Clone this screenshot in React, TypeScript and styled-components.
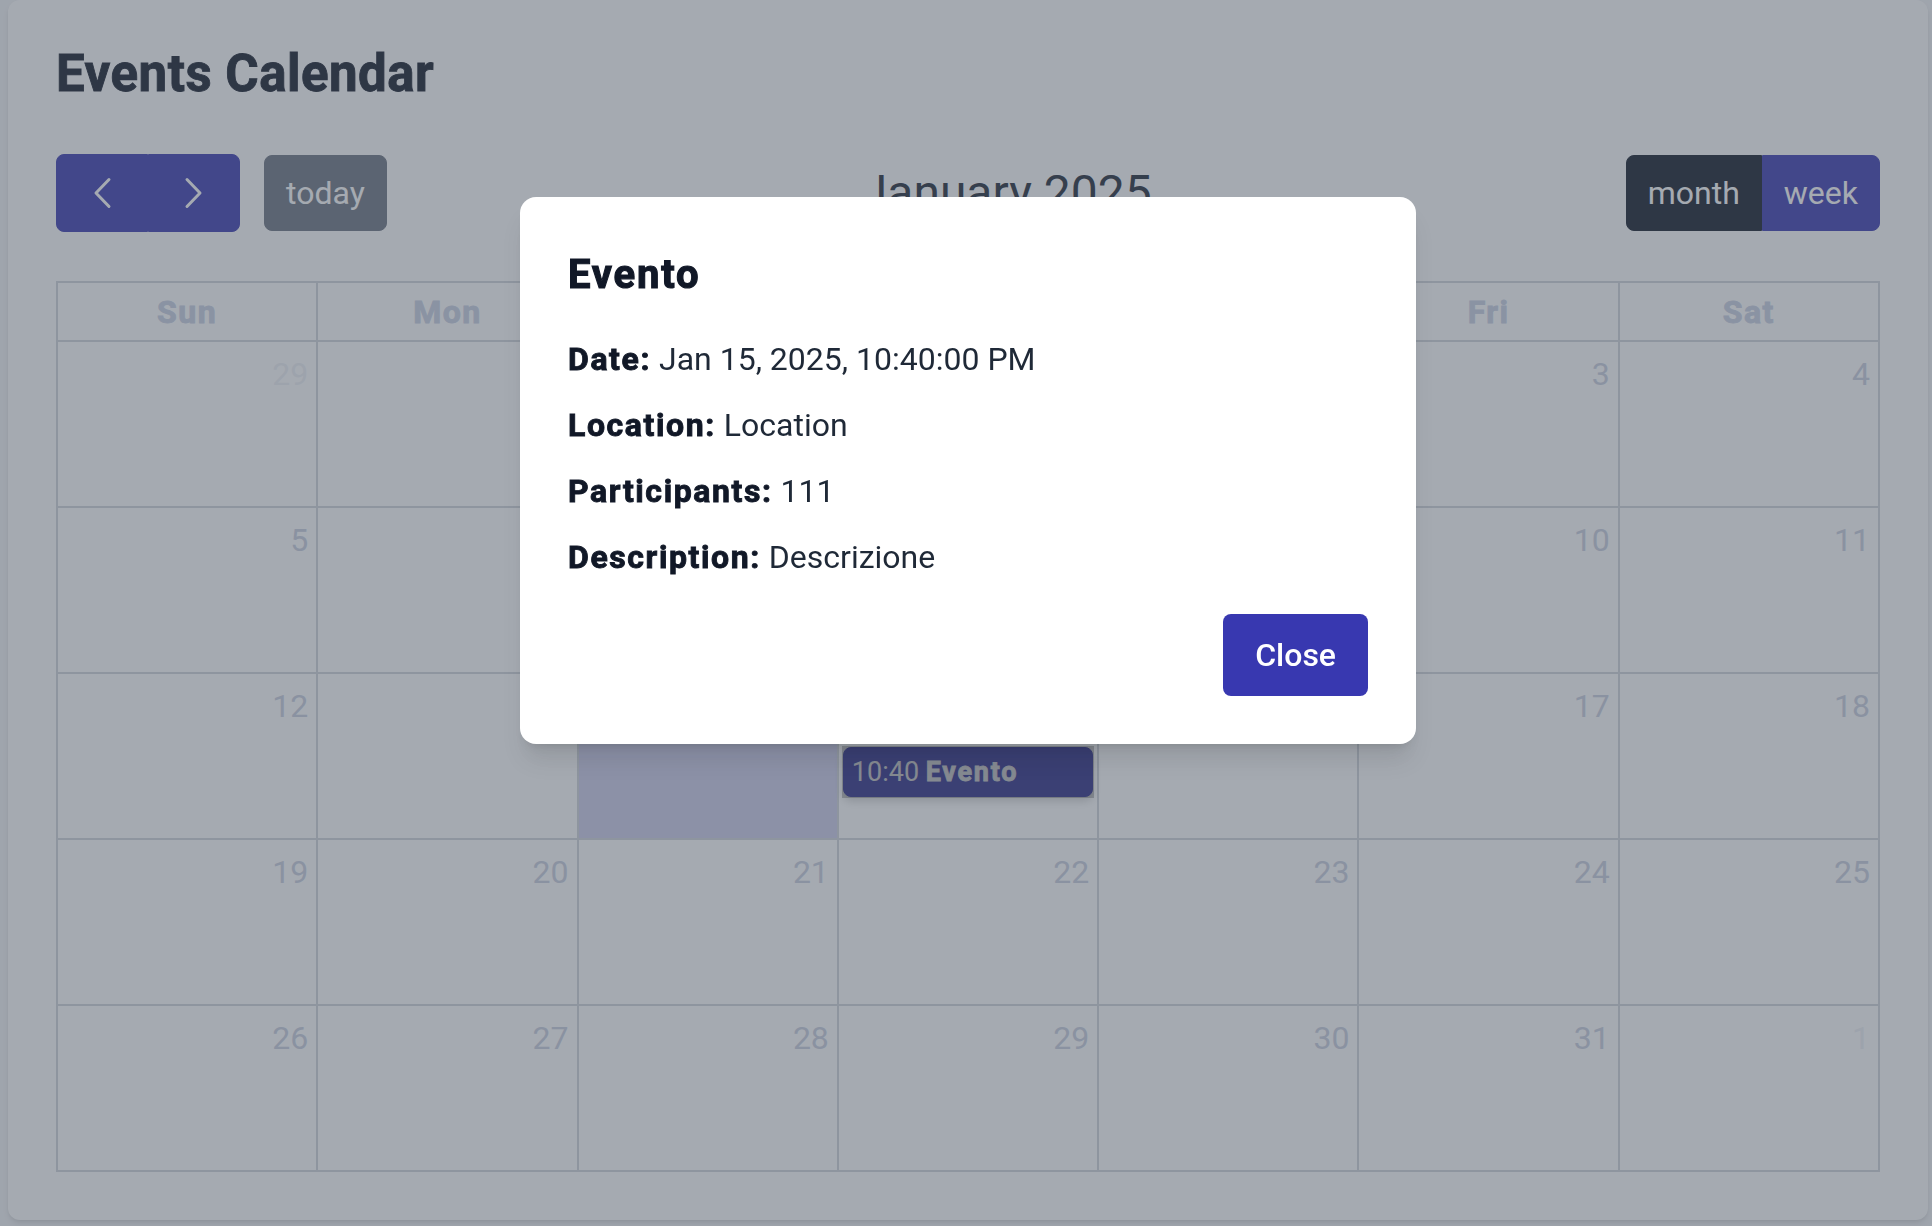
import React from "react";
import styled, { createGlobalStyle, css } from "styled-components";

const GlobalStyle = createGlobalStyle`
  html, body {
    margin: 0;
    padding: 0;
  }
  body {
    background: #f3f4f6;
    font-family: Roboto, "Liberation Sans", Arial, sans-serif;
    color: #111827;
  }
  *, *::before, *::after {
    box-sizing: border-box;
  }
`;

const INDIGO = "#3838b0";
const LINE = "#d1d5db";

/* Heavy (black-like) weight: bold face thickened and slightly widened */
const heavy = (stroke: number, spacing: number) => css`
  font-weight: 700;
  -webkit-text-stroke: ${stroke}px currentColor;
  letter-spacing: ${spacing}px;
`;

const Page = styled.div`
  padding: 0 4px 6px 8px;
`;

const Card = styled.main`
  width: 1920px;
  background: #ffffff;
  border-radius: 12px;
  box-shadow: 0 4px 6px -1px rgba(0, 0, 0, 0.1), 0 2px 4px -2px rgba(0, 0, 0, 0.1);
  padding: 44px 48px 48px;
`;

const PageTitle = styled.h1`
  margin: 0 0 50px;
  font-size: 51px;
  line-height: 60px;
  ${heavy(0.9, 0.5)}
  color: #111827;
`;

const Toolbar = styled.div`
  display: flex;
  justify-content: space-between;
  align-items: center;
  height: 78px;
  margin-bottom: 49px;
`;

const Chunk = styled.div`
  display: flex;
  align-items: center;
  gap: 24px;
`;

const ButtonGroup = styled.div`
  display: flex;
  align-items: stretch;
`;

type Variant = "primary" | "muted" | "dark";
type Pos = "left" | "right" | "single";

const bgFor = (v: Variant) => (v === "primary" ? INDIGO : v === "dark" ? "#111827" : "#6b7280");

const radiusFor = (p: Pos) =>
  p === "left" ? "8px 0 0 8px" : p === "right" ? "0 8px 8px 0" : "8px";

const ToolButton = styled.button<{ $variant: Variant; $pos: Pos; $tall?: boolean }>`
  display: flex;
  align-items: center;
  justify-content: center;
  font-family: inherit;
  font-size: 32px;
  line-height: 48px;
  font-weight: 400;
  color: #ffffff;
  background: ${(p) => bgFor(p.$variant)};
  border: 1px solid ${(p) => bgFor(p.$variant)};
  border-radius: ${(p) => radiusFor(p.$pos)};
  height: ${(p) => (p.$tall ? "78px" : "76px")};
  padding: 0 21px;
  cursor: pointer;
`;

const IconBox = styled.span`
  display: flex;
  align-items: center;
  justify-content: center;
  width: 48px;
  height: 48px;
`;

const MonthTitle = styled.h2`
  margin: 0;
  font-size: 48px;
  line-height: 56px;
  font-weight: 400;
  color: #1f2937;
`;

const Grid = styled.div`
  display: grid;
  grid-template-columns: repeat(7, 1fr);
  border-top: 2px solid ${LINE};
  border-left: 2px solid ${LINE};
`;

const HeadCell = styled.div`
  height: 59px;
  border-right: 2px solid ${LINE};
  border-bottom: 2px solid ${LINE};
  display: flex;
  align-items: center;
  justify-content: center;
  font-size: 32px;
  line-height: 48px;
  ${heavy(0.9, 1.5)}
  color: #c9d0e3;
`;

const DayCell = styled.div<{ $today?: boolean }>`
  height: 166px;
  min-width: 0;
  border-right: 2px solid ${LINE};
  border-bottom: 2px solid ${LINE};
  background: ${(p) => (p.$today ? "rgba(56, 56, 176, 0.25)" : "transparent")};
  display: flex;
  flex-direction: column;
`;

const DayNumber = styled.div<{ $other?: boolean }>`
  align-self: flex-end;
  padding: 8px;
  font-size: 32px;
  line-height: 48px;
  color: #c9cede;
  opacity: ${(p) => (p.$other ? 0.3 : 1)};
`;

const EventChip = styled.div`
  position: relative;
  margin: 9px 4px 0;
  height: 50px;
  border-radius: 8px;
  background: ${INDIGO};
  border: 1px solid ${INDIGO};
  color: #ffffff;
  font-size: 27px;
  line-height: 48px;
  padding: 0 8px;
  white-space: nowrap;
  box-shadow: 0 4px 10px rgba(0, 0, 0, 0.2);

  &::after {
    content: "";
    position: absolute;
    inset: -2px;
    background: rgba(0, 0, 0, 0.25);
  }
`;

const EventTitle = styled.b`
  ${heavy(0.8, 1.7)}
`;

const Backdrop = styled.div`
  position: fixed;
  inset: 0;
  background: rgba(75, 85, 99, 0.5);
  display: flex;
  justify-content: center;
  align-items: flex-start;
  padding: 197px 0 0 4px;
  z-index: 10;
`;

const Dialog = styled.div`
  width: 896px;
  background: #ffffff;
  border-radius: 16px;
  padding: 48px;
  box-shadow: 0 20px 25px -5px rgba(0, 0, 0, 0.1), 0 8px 10px -6px rgba(0, 0, 0, 0.1);
`;

const DialogTitle = styled.h2`
  margin: 0 0 30px;
  font-size: 40px;
  line-height: 60px;
  ${heavy(1.1, 1.8)}
  color: #111827;
`;

const DetailList = styled.div`
  display: flex;
  flex-direction: column;
  gap: 18px;
`;

const Detail = styled.p`
  margin: 0;
  font-size: 32px;
  line-height: 48px;
  color: #1f2937;
`;

const Label = styled.strong`
  ${heavy(0.9, 1.6)}
  color: #111827;
`;

const Footer = styled.div`
  display: flex;
  justify-content: flex-end;
  margin-top: 33px;
`;

const CloseButton = styled.button`
  font-family: inherit;
  font-size: 32px;
  line-height: 48px;
  font-weight: 500;
  padding: 17px 32px;
  border: none;
  border-radius: 8px;
  background: ${INDIGO};
  color: #ffffff;
  cursor: pointer;
`;

const Chevron = ({ dir }: { dir: "left" | "right" }) => (
  <svg width="20" height="32" viewBox="0 0 20 32" fill="none">
    <polyline
      points={dir === "left" ? "17,2.5 4,16 17,29.5" : "3,2.5 16,16 3,29.5"}
      stroke="currentColor"
      strokeWidth="3"
      strokeLinecap="round"
      strokeLinejoin="round"
    />
  </svg>
);

const DAYS = ["Sun", "Mon", "Tue", "Wed", "Thu", "Fri", "Sat"];

type Day = { n: number; other?: boolean; today?: boolean; event?: boolean };

const buildWeeks = (): Day[][] => {
  const cells: Day[] = [
    { n: 29, other: true },
    { n: 30, other: true },
    { n: 31, other: true },
  ];
  for (let d = 1; d <= 31; d++) {
    cells.push({ n: d, today: d === 14, event: d === 15 });
  }
  cells.push({ n: 1, other: true });
  const weeks: Day[][] = [];
  for (let i = 0; i < cells.length; i += 7) weeks.push(cells.slice(i, i + 7));
  return weeks;
};

export default function App() {
  const weeks = buildWeeks();
  return (
    <>
      <GlobalStyle />
      <Page>
        <Card>
          <PageTitle>Events Calendar</PageTitle>
          <Toolbar>
            <Chunk>
              <ButtonGroup>
                <ToolButton $variant="primary" $pos="left" $tall aria-label="prev">
                  <IconBox>
                    <Chevron dir="left" />
                  </IconBox>
                </ToolButton>
                <ToolButton $variant="primary" $pos="right" $tall aria-label="next">
                  <IconBox>
                    <Chevron dir="right" />
                  </IconBox>
                </ToolButton>
              </ButtonGroup>
              <ToolButton $variant="muted" $pos="single">today</ToolButton>
            </Chunk>
            <MonthTitle>January 2025</MonthTitle>
            <ButtonGroup>
              <ToolButton $variant="dark" $pos="left">month</ToolButton>
              <ToolButton $variant="primary" $pos="right">week</ToolButton>
            </ButtonGroup>
          </Toolbar>
          <Grid>
            {DAYS.map((d) => (
              <HeadCell key={d}>{d}</HeadCell>
            ))}
            {weeks.map((week, wi) =>
              week.map((day, di) => (
                <DayCell key={`${wi}-${di}`} $today={day.today}>
                  <DayNumber $other={day.other}>{day.n}</DayNumber>
                  {day.event && (
                    <EventChip>
                      10:40 <EventTitle>Evento</EventTitle>
                    </EventChip>
                  )}
                </DayCell>
              ))
            )}
          </Grid>
        </Card>
      </Page>
      <Backdrop>
        <Dialog>
          <DialogTitle>Evento</DialogTitle>
          <DetailList>
            <Detail>
              <Label>Date:</Label> Jan 15, 2025, 10:40:00 PM
            </Detail>
            <Detail>
              <Label>Location:</Label> Location
            </Detail>
            <Detail>
              <Label>Participants:</Label> 111
            </Detail>
            <Detail>
              <Label>Description:</Label> Descrizione
            </Detail>
          </DetailList>
          <Footer>
            <CloseButton>Close</CloseButton>
          </Footer>
        </Dialog>
      </Backdrop>
    </>
  );
}
